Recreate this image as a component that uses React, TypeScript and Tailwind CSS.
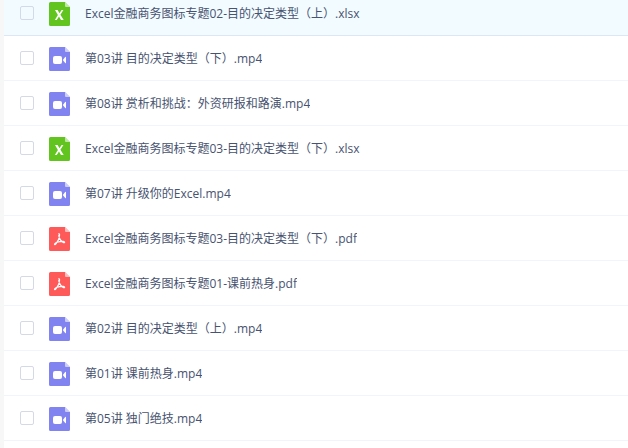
import { useState } from "react";
import clsx from "clsx";

type FileKind = "xlsx" | "mp4" | "pdf";

const files: { name: string; kind: FileKind }[] = [
  { name: "Excel金融商务图标专题02-目的决定类型（上）.xlsx", kind: "xlsx" },
  { name: "第03讲 目的决定类型（下）.mp4", kind: "mp4" },
  { name: "第08讲 赏析和挑战：外资研报和路演.mp4", kind: "mp4" },
  { name: "Excel金融商务图标专题03-目的决定类型（下）.xlsx", kind: "xlsx" },
  { name: "第07讲 升级你的Excel.mp4", kind: "mp4" },
  { name: "Excel金融商务图标专题03-目的决定类型（下）.pdf", kind: "pdf" },
  { name: "Excel金融商务图标专题01-课前热身.pdf", kind: "pdf" },
  { name: "第02讲 目的决定类型（上）.mp4", kind: "mp4" },
  { name: "第01讲 课前热身.mp4", kind: "mp4" },
  { name: "第05讲 独门绝技.mp4", kind: "mp4" },
];

const iconColors: Record<FileKind, string> = {
  xlsx: "#62c51f",
  mp4: "#8083f0",
  pdf: "#ff5a5a",
};

function FileIcon({ kind }: { kind: FileKind }) {
  return (
    <svg width="21" height="24" viewBox="0 0 21 24" fill="none" aria-hidden="true" className="shrink-0">
      <path
        d="M1.5 0H16l5 5v17.5a1.5 1.5 0 0 1-1.5 1.5h-18A1.5 1.5 0 0 1 0 22.5v-21A1.5 1.5 0 0 1 1.5 0Z"
        fill={iconColors[kind]}
      />
      <path d="M16 0l5 5h-4a1 1 0 0 1-1-1V0Z" fill="#fff" fillOpacity="0.6" />
      {kind === "xlsx" && (
        <path d="M6 8h2.6l1.9 3.3L12.6 8h1.8l-3 4.7 3.3 5.3H12l-2-3.600L7.700 18H5.800l3.100-5Z" fill="#fff" />
      )}
      {kind === "mp4" && (
        <>
          <rect x="4" y="9" width="9" height="8" rx="2" fill="#fff" />
          <path d="M13.800 13 16.200 10Q17 9.300 17 10.200v5.600Q17 16.700 16.200 16Z" fill="#fff" />
        </>
      )}
      {kind === "pdf" && (
        <path
          d="M9.600 7c.6-.5 1.100.1 1 1.100-.2 2.700-1.600 6-3.300 8.300-.7 1-1.500 1.500-1.800 1.100-.4-.6.9-1.600 2.700-2.200 2.200-.8 4.500-1.100 6-.9 1.200.2 1.700.7 1.300 1.100-.5.5-2-.2-3.100-1.400C11 12.500 10 10.300 9.700 8.600"
          stroke="#fff"
          strokeWidth="1.1"
          strokeLinecap="round"
          strokeLinejoin="round"
        />
      )}
    </svg>
  );
}

export default function App() {
  const [selected, setSelected] = useState<string[]>([]);

  const toggle = (name: string) => {
    setSelected((prev) =>
      prev.includes(name) ? prev.filter((n) => n !== name) : [...prev, name]
    );
  };

  return (
    <main className="h-screen overflow-hidden bg-white border-l-4 border-[#f7f7f7] font-['Open_Sans','Noto_Sans_CJK_SC',sans-serif]">
      {/* list is scrolled a little past the top of its first row */}
      <ul className="-mt-[9px]">
        {files.map((file, i) => (
          <li
            key={file.name}
            className={clsx(
              "border-b",
              i === 0 ? "bg-[#f2fbff] border-[#dde6f5]" : "border-[#f1f4fb] hover:bg-[#f2fbff]"
            )}
          >
            <label className="flex items-center h-11 px-4 text-xs text-[#475370] cursor-pointer">
              <input
                type="checkbox"
                checked={selected.includes(file.name)}
                onChange={() => toggle(file.name)}
                className="appearance-none shrink-0 size-3.5 mr-[15px] rounded-xs border border-[#d3d9e6] bg-transparent checked:bg-[#06a7ff] checked:border-[#06a7ff]"
              />
              <span className="pt-0.5">
                <FileIcon kind={file.kind} />
              </span>
              <span className="ml-[15px] pt-0.5 truncate">{file.name}</span>
            </label>
          </li>
        ))}
      </ul>
    </main>
  );
}
